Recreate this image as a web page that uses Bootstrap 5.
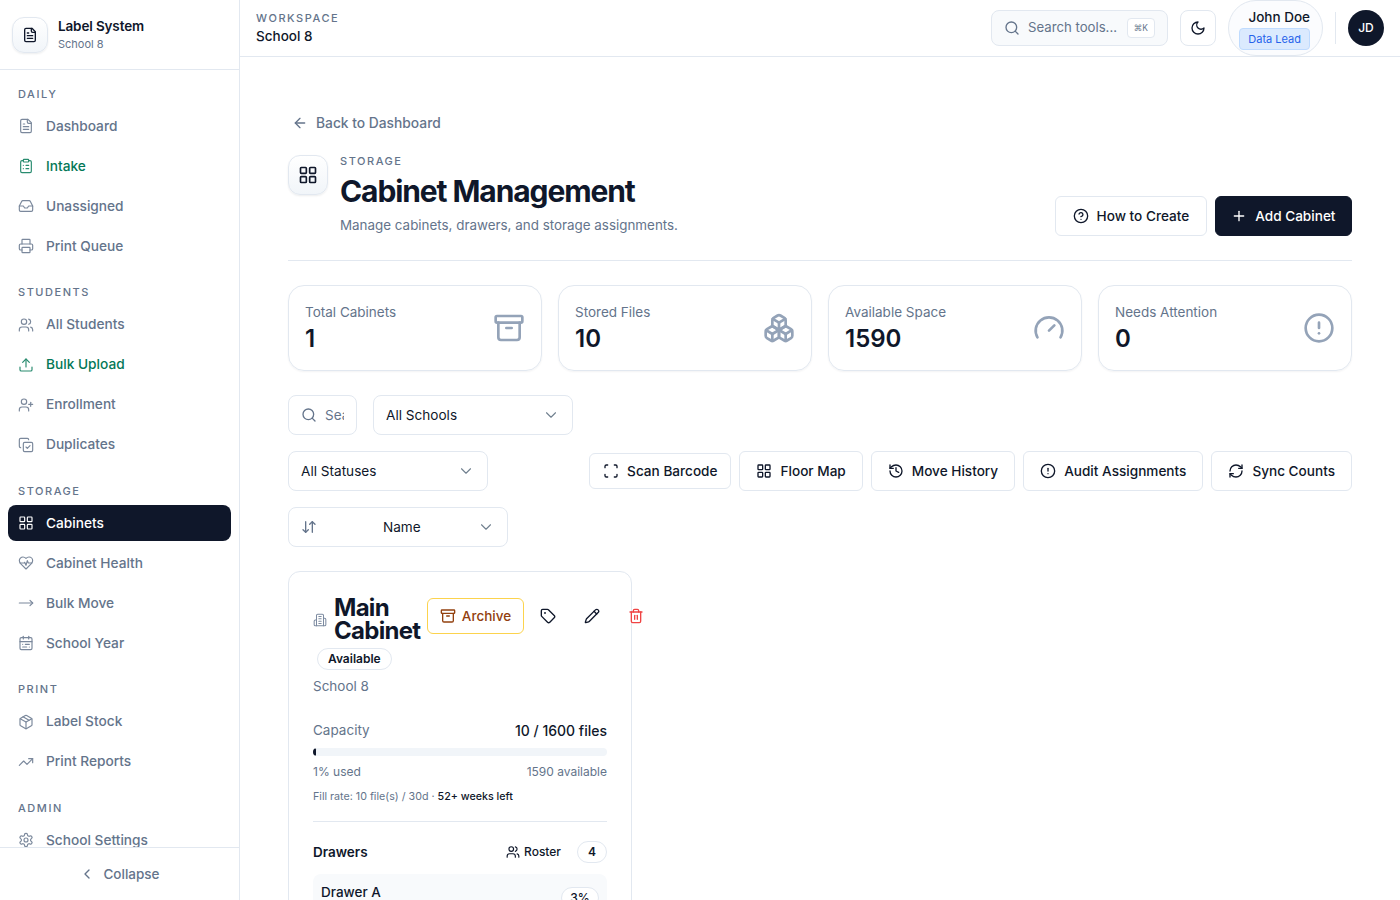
<!DOCTYPE html>
<html lang="en">
<head>
    <meta charset="UTF-8">
    <meta name="viewport" content="width=device-width, initial-scale=1.0">
    <title>Cabinet Management</title>
    <link rel="stylesheet" href="https://cdn.jsdelivr.net/npm/bootstrap@5.3.0/dist/css/bootstrap.min.css">
    <style>
        html, body { height: 100%; }
        body { font-family: Inter, "Liberation Sans", sans-serif; font-size: 13.5px; color: #0f172a; overflow: hidden; background: #fff; }
        .ico { width: 16px; height: 16px; fill: none; stroke: currentColor; stroke-width: 2; stroke-linecap: round; stroke-linejoin: round; flex-shrink: 0; }
        .app { height: 900px; }

        .sidebar { width: 240px; border-right: 1px solid #e2e8f0; flex-shrink: 0; }
        .brand { height: 70px; padding: 0 12px; gap: 10px; border-bottom: 1px solid #e2e8f0; }
        .brand-icon { width: 36px; height: 36px; }
        .brand-text { margin-bottom: 2px; }
        .logo-box { border: 1px solid #e2e8f0; border-radius: 12px; background: linear-gradient(#fff, #f1f5f9); box-shadow: 0 1px 2px rgba(15, 23, 42, .08); }
        .brand-title { font-weight: 600; line-height: 20px; letter-spacing: -.01em; }
        .brand-sub { font-size: 11px; line-height: 16px; color: #64748b; }
        .side-nav { padding: 15.75px 8px 0; overflow: hidden; }
        .side-label { font-size: 11px; font-weight: 500; line-height: 16.5px; letter-spacing: .14em; color: #64748b; padding-left: 10px; margin-bottom: 6px; }
        .side-group { display: flex; flex-direction: column; gap: 4px; margin-bottom: 20px; }
        .side-link { height: 36px; padding: 0 10px; gap: 12px; border-radius: 8px; color: #64748b; font-size: 13.7px; text-decoration: none; font-weight: 500; }
        .side-link .ico { stroke-width: 1.75; opacity: .85; }
        .side-link.green { color: #047857; }
        .side-link.active { background: #0f172a; color: #fff; }
        .side-link.active .ico { opacity: 1; }
        .collapse-row { height: 53px; border-top: 1px solid #e2e8f0; color: #64748b; font-weight: 500; gap: 8px; background: #fff; flex-shrink: 0; }

        .topbar { height: 57px; border-bottom: 1px solid #e2e8f0; padding: 0 16px; flex-shrink: 0; gap: 12px; }
        .eyebrow { font-size: 11px; font-weight: 500; line-height: 16px; letter-spacing: .14em; color: #64748b; }
        .ws-name { font-weight: 500; line-height: 20px; }
        .top-search { width: 177px; height: 36px; padding: 0 12px; gap: 8px; background: #f8fafc; border: 1px solid #e2e8f0; border-radius: 8px; color: #64748b; font-size: 13.2px; white-space: nowrap; }
        .top-kbd { font-size: 8.5px; line-height: 18px; padding: 0 6px; background: #fff; border: 1px solid #e2e8f0; border-radius: 4px; color: #64748b; margin-left: auto; }
        .btn-square { width: 36px; height: 36px; padding: 0; border: 1px solid #e2e8f0; border-radius: 8px; background: #fff; color: #0f172a; display: flex; align-items: center; justify-content: center; }
        .user-pill { width: 95px; height: 56px; padding-right: 12px; border: 1px solid #e2e8f0; border-radius: 28px; background: #fbfcfe; }
        .user-name { font-weight: 500; line-height: 20px; }
        .user-role { font-size: 11px; line-height: 20px; padding: 0 8px; margin-top: 1px; color: #2563eb; background: #dbeafe; border: 1px solid #bfdbfe; border-radius: 4px; }
        .top-div { width: 1px; height: 32px; background: #e2e8f0; }
        .avatar { width: 36px; height: 36px; background: #0f172a; color: #fff; font-size: 12px; font-weight: 500; }

        .page { padding: 56px 48px 0; overflow: hidden; }
        .back-link { color: #64748b; gap: 8px; padding-left: 4px; font-size: 13.8px; line-height: 20px; font-weight: 500; text-decoration: none; margin-bottom: 22px; }
        .page-icon { width: 40px; height: 40px; margin-right: 12px; }
        .page-title { font-size: 30px; font-weight: 700; line-height: 36px; letter-spacing: -1.1px; margin: 4px 0 6px; }
        .page-desc { color: #64748b; font-size: 13.4px; line-height: 20px; margin-bottom: 1px; }
        .page-head { padding-bottom: 24px; border-bottom: 1px solid #e2e8f0; margin-bottom: 24px; }
        .head-btn { height: 40px; padding: 0 16.5px; gap: 8px; border-radius: 6px; font-size: 13.6px; font-weight: 500; }
        .head-btn.btn-dark-navy { padding: 0 15.5px; }
        .btn-outline { background: #fff; border: 1px solid #e2e8f0; color: #0f172a; }
        .btn-dark-navy { background: #0f172a; border: 1px solid #0f172a; color: #fff; }

        .stat-card { flex: 1 1 0; height: 86px; padding: 16px; border: 1px solid #e2e8f0; border-radius: 16px; box-shadow: 0 1px 2px rgba(15, 23, 42, .05); }
        .stat-label { color: #64748b; line-height: 20px; }
        .stat-value { font-size: 24px; font-weight: 600; line-height: 32px; margin-top: 1px; }
        .stat-icon { width: 32px; height: 32px; color: #94a3b8; margin-top: 10px; }

        .filter-box { height: 40px; border: 1px solid #e2e8f0; border-radius: 8px; font-size: 13.6px; color: #0f172a; box-shadow: none; background-color: #fff; }
        .filter-search { width: 69px; padding: 0 12px; gap: 8px; color: #64748b; }
        .filter-search input { border: 0; outline: 0; min-width: 0; width: 100%; padding: 0; font-size: 13.5px; background: transparent; }
        .filter-search input::placeholder { color: #64748b; }
        .w-200 { width: 200px; }
        .form-select.filter-box { padding: 0 36px 0 12px; background-image: url("data:image/svg+xml,%3csvg xmlns='http://www.w3.org/2000/svg' viewBox='0 0 16 16'%3e%3cpath fill='none' stroke='%2371808f' stroke-linecap='round' stroke-linejoin='round' stroke-width='1.5' d='m2 5 6 6 6-6'/%3e%3c/svg%3e"); background-size: 12px; background-position: right 15px center; }
        .sort-wrap { width: 220px; }
        .sort-icon { position: absolute; left: 13px; top: 12px; color: #64748b; }
        .form-select.sort-select { padding-left: 94px; }
        .tool-btn { height: 40px; padding: 0 16px; gap: 8px; border-radius: 6px; font-weight: 500; font-size: 13.6px; }
        .tool-btn.small { height: 36px; padding: 0 13px; gap: 8.5px; }

        .cab-card { width: 344px; padding: 24px; border: 1px solid #e2e8f0; border-radius: 12px; }
        .cab-left { width: 107px; flex-shrink: 0; }
        .cab-title { font-size: 24px; font-weight: 700; line-height: 23px; letter-spacing: -.03em; margin: 0; }
        .cab-bldg { width: 14px; height: 14px; color: #7c8aa0; margin-top: 17px; margin-right: 7px; stroke-width: 1.75; }
        .status-pill { font-size: 12px; font-weight: 600; line-height: 20px; padding: 0 10px; border: 1px solid #e2e8f0; border-radius: 999px; margin: 6px 0 0 4px; }
        .cab-actions { gap: 8px; flex-shrink: 0; margin-left: 7px; margin-top: 2px; }
        .archive-btn { height: 36px; width: 97px; padding: 0; gap: 6px; border: 1px solid #fcd34d; border-radius: 6px; color: #92400e; background: #fff; font-size: 13.5px; font-weight: 500; margin-right: -2px; }
        .icon-btn { width: 36px; height: 36px; padding: 0; border: 0; background: transparent; color: #0f172a; display: flex; align-items: center; justify-content: center; }
        .icon-btn.danger { color: #ef4444; }
        .muted { color: #64748b; }
        .school-line { line-height: 21px; margin-top: 6px; }
        .cap-row { line-height: 21px; margin-top: 23px; }
        .cap-value { font-size: 14px; font-weight: 500; }
        .cap-bar { height: 8px; margin-top: 7px; background: #f1f5f9; border-radius: 999px; }
        .cap-bar .progress-bar { background: #0f172a; border-radius: 999px; }
        .cap-foot { font-size: 12px; line-height: 18px; margin-top: 7px; color: #64748b; }
        .fill-rate { font-size: 10.7px; line-height: 16px; margin-top: 8px; color: #64748b; }
        .fill-rate b { font-weight: 500; color: #0f172a; }
        .cab-hr { height: 1px; background: #e2e8f0; margin: 16px 0 19px; }
        .drawers-title { font-weight: 600; }
        .roster { font-size: 12px; font-weight: 500; gap: 4px; margin-right: 16px; }
        .count-pill { width: 30px; height: 22px; font-size: 12px; font-weight: 600; border: 1px solid #e2e8f0; border-radius: 999px; }
        .drawer-row { margin-top: 11px; padding: 8px; background: #f8fafc; border-radius: 8px; height: 90px; }
        .drawer-name { font-weight: 500; line-height: 21px; }
        .drawer-pct { width: 38px; height: 22px; font-size: 12px; font-weight: 500; border: 1px solid #e2e8f0; border-radius: 999px; margin-top: 5px; background: #fff; }
    </style>
</head>
<body>
    <svg width="0" height="0" class="position-absolute">
        <symbol id="i-file" viewBox="0 0 24 24"><path d="M15 2H6a2 2 0 0 0-2 2v16a2 2 0 0 0 2 2h12a2 2 0 0 0 2-2V7Z"/><path d="M14 2v4a2 2 0 0 0 2 2h4"/><path d="M10 9H8"/><path d="M16 13H8"/><path d="M16 17H8"/></symbol>
        <symbol id="i-clipboard" viewBox="0 0 24 24"><rect x="8" y="2" width="8" height="4" rx="1"/><path d="M16 4h2a2 2 0 0 1 2 2v14a2 2 0 0 1-2 2H6a2 2 0 0 1-2-2V6a2 2 0 0 1 2-2h2"/><path d="M12 11h4"/><path d="M12 16h4"/><path d="M8 11h.01"/><path d="M8 16h.01"/></symbol>
        <symbol id="i-inbox" viewBox="0 0 24 24"><polyline points="22 12 16 12 14 15 10 15 8 12 2 12"/><path d="M5.45 5.11 2 12v6a2 2 0 0 0 2 2h16a2 2 0 0 0 2-2v-6l-3.45-6.89A2 2 0 0 0 16.76 4H7.24a2 2 0 0 0-1.79 1.11z"/></symbol>
        <symbol id="i-printer" viewBox="0 0 24 24"><path d="M6 18H4a2 2 0 0 1-2-2v-5a2 2 0 0 1 2-2h16a2 2 0 0 1 2 2v5a2 2 0 0 1-2 2h-2"/><path d="M6 9V3a1 1 0 0 1 1-1h10a1 1 0 0 1 1 1v6"/><rect x="6" y="14" width="12" height="8" rx="1"/></symbol>
        <symbol id="i-users" viewBox="0 0 24 24"><path d="M16 21v-2a4 4 0 0 0-4-4H6a4 4 0 0 0-4 4v2"/><path d="M16 3.128a4 4 0 0 1 0 7.744"/><path d="M22 21v-2a4 4 0 0 0-3-3.87"/><circle cx="9" cy="7" r="4"/></symbol>
        <symbol id="i-upload" viewBox="0 0 24 24"><path d="M12 3v12"/><path d="m17 8-5-5-5 5"/><path d="M21 15v4a2 2 0 0 1-2 2H5a2 2 0 0 1-2-2v-4"/></symbol>
        <symbol id="i-user-plus" viewBox="0 0 24 24"><path d="M16 21v-2a4 4 0 0 0-4-4H6a4 4 0 0 0-4 4v2"/><circle cx="9" cy="7" r="4"/><line x1="19" y1="8" x2="19" y2="14"/><line x1="22" y1="11" x2="16" y2="11"/></symbol>
        <symbol id="i-copy-check" viewBox="0 0 24 24"><path d="m12 15 2 2 4-4"/><rect x="8" y="8" width="14" height="14" rx="2"/><path d="M4 16c-1.1 0-2-.9-2-2V4c0-1.1.9-2 2-2h10c1.1 0 2 .9 2 2"/></symbol>
        <symbol id="i-grid" viewBox="0 0 24 24"><rect x="3" y="3" width="7" height="7" rx="1"/><rect x="14" y="3" width="7" height="7" rx="1"/><rect x="14" y="14" width="7" height="7" rx="1"/><rect x="3" y="14" width="7" height="7" rx="1"/></symbol>
        <symbol id="i-heart" viewBox="0 0 24 24"><path d="M19 14c1.49-1.46 3-3.21 3-5.5A5.5 5.5 0 0 0 16.5 3c-1.76 0-3 .5-4.5 2-1.5-1.5-2.74-2-4.5-2A5.5 5.5 0 0 0 2 8.5c0 2.3 1.5 4.05 3 5.5l7 7Z"/><path d="M3.22 12H9.5l.5-1 2 4.5 2-7 1.5 3.5h5.27"/></symbol>
        <symbol id="i-move" viewBox="0 0 24 24"><path d="M18 8 22 12 18 16"/><path d="M2 12H22"/></symbol>
        <symbol id="i-calendar" viewBox="0 0 24 24"><rect x="3" y="4" width="18" height="18" rx="2"/><path d="M16 2v4"/><path d="M3 10h18"/><path d="M8 2v4"/><path d="M17 14h-6"/><path d="M13 18H7"/><path d="M7 14h.01"/><path d="M17 18h.01"/></symbol>
        <symbol id="i-package" viewBox="0 0 24 24"><path d="M11 21.73a2 2 0 0 0 2 0l7-4A2 2 0 0 0 21 16V8a2 2 0 0 0-1-1.73l-7-4a2 2 0 0 0-2 0l-7 4A2 2 0 0 0 3 8v8a2 2 0 0 0 1 1.73z"/><path d="M12 22V12"/><polyline points="3.29 7 12 12 20.71 7"/><path d="m7.5 4.27 9 5.15"/></symbol>
        <symbol id="i-trend" viewBox="0 0 24 24"><polyline points="22 7 13.5 15.5 8.5 10.5 2 17"/><polyline points="16 7 22 7 22 13"/></symbol>
        <symbol id="i-gear" viewBox="0 0 24 24"><path d="M12.22 2h-.44a2 2 0 0 0-2 2v.18a2 2 0 0 1-1 1.73l-.43.25a2 2 0 0 1-2 0l-.15-.08a2 2 0 0 0-2.73.73l-.22.38a2 2 0 0 0 .73 2.73l.15.1a2 2 0 0 1 1 1.72v.51a2 2 0 0 1-1 1.74l-.15.09a2 2 0 0 0-.73 2.73l.22.38a2 2 0 0 0 2.73.73l.15-.08a2 2 0 0 1 2 0l.43.25a2 2 0 0 1 1 1.73V20a2 2 0 0 0 2 2h.44a2 2 0 0 0 2-2v-.18a2 2 0 0 1 1-1.73l.43-.25a2 2 0 0 1 2 0l.15.08a2 2 0 0 0 2.73-.73l.22-.39a2 2 0 0 0-.73-2.73l-.15-.08a2 2 0 0 1-1-1.74v-.5a2 2 0 0 1 1-1.74l.15-.09a2 2 0 0 0 .73-2.73l-.22-.38a2 2 0 0 0-2.73-.73l-.15.08a2 2 0 0 1-2 0l-.43-.25a2 2 0 0 1-1-1.73V4a2 2 0 0 0-2-2z"/><circle cx="12" cy="12" r="3"/></symbol>
        <symbol id="i-chev-left" viewBox="0 0 24 24"><path d="m15 18-6-6 6-6"/></symbol>
        <symbol id="i-search" viewBox="0 0 24 24"><path d="m21 21-4.3-4.3"/><circle cx="11" cy="11" r="8"/></symbol>
        <symbol id="i-moon" viewBox="0 0 24 24"><path d="M12 3a6 6 0 0 0 9 9 9 9 0 1 1-9-9Z"/></symbol>
        <symbol id="i-arrow-left" viewBox="0 0 24 24"><path d="m12 19-7-7 7-7"/><path d="M19 12H5"/></symbol>
        <symbol id="i-help" viewBox="0 0 24 24"><circle cx="12" cy="12" r="10"/><path d="M9.09 9a3 3 0 0 1 5.83 1c0 2-3 3-3 3"/><path d="M12 17h.01"/></symbol>
        <symbol id="i-plus" viewBox="0 0 24 24"><path d="M5 12h14"/><path d="M12 5v14"/></symbol>
        <symbol id="i-archive" viewBox="0 0 24 24"><rect x="2" y="3" width="20" height="5" rx="1"/><path d="M4 8v11a2 2 0 0 0 2 2h12a2 2 0 0 0 2-2V8"/><path d="M10 12h4"/></symbol>
        <symbol id="i-boxes" viewBox="0 0 24 24"><path d="M2.97 12.92A2 2 0 0 0 2 14.63v3.24a2 2 0 0 0 .97 1.71l3 1.8a2 2 0 0 0 2.06 0L12 19v-5.5l-5-3-4.03 2.42Z"/><path d="m7 16.5-4.74-2.85"/><path d="m7 16.5 5-3"/><path d="M7 16.5v5.17"/><path d="M12 13.5V19l3.97 2.38a2 2 0 0 0 2.06 0l3-1.8a2 2 0 0 0 .97-1.71v-3.24a2 2 0 0 0-.97-1.71L17 10.5l-5 3Z"/><path d="m17 16.5-5-3"/><path d="m17 16.5 4.74-2.85"/><path d="M17 16.5v5.17"/><path d="M7.97 4.42A2 2 0 0 0 7 6.13v4.37l5 3 5-3V6.13a2 2 0 0 0-.97-1.71l-3-1.8a2 2 0 0 0-2.06 0l-3 1.8Z"/><path d="M12 8 7.26 5.15"/><path d="m12 8 4.74-2.85"/><path d="M12 13.5V8"/></symbol>
        <symbol id="i-gauge" viewBox="0 0 24 24"><path d="m12 14 4-4"/><path d="M3.34 19a10 10 0 1 1 17.32 0"/></symbol>
        <symbol id="i-alert" viewBox="0 0 24 24"><circle cx="12" cy="12" r="10"/><line x1="12" y1="8" x2="12" y2="12"/><line x1="12" y1="16" x2="12.01" y2="16"/></symbol>
        <symbol id="i-sort" viewBox="0 0 24 24"><path d="m3 16 4 4 4-4"/><path d="M7 20V4"/><path d="m21 8-4-4-4 4"/><path d="M17 4v16"/></symbol>
        <symbol id="i-scan" viewBox="0 0 24 24"><path d="M3 7V5a2 2 0 0 1 2-2h2"/><path d="M17 3h2a2 2 0 0 1 2 2v2"/><path d="M21 17v2a2 2 0 0 1-2 2h-2"/><path d="M7 21H5a2 2 0 0 1-2-2v-2"/></symbol>
        <symbol id="i-history" viewBox="0 0 24 24"><path d="M3 12a9 9 0 1 0 9-9 9.75 9.75 0 0 0-6.74 2.74L3 8"/><path d="M3 3v5h5"/><path d="M12 7v5l4 2"/></symbol>
        <symbol id="i-refresh" viewBox="0 0 24 24"><path d="M3 12a9 9 0 0 1 9-9 9.75 9.75 0 0 1 6.74 2.74L21 8"/><path d="M21 3v5h-5"/><path d="M21 12a9 9 0 0 1-9 9 9.75 9.75 0 0 1-6.74-2.74L3 16"/><path d="M8 16H3v5"/></symbol>
        <symbol id="i-building" viewBox="0 0 24 24"><path d="M6 22V4a2 2 0 0 1 2-2h8a2 2 0 0 1 2 2v18Z"/><path d="M6 12H4a2 2 0 0 0-2 2v6a2 2 0 0 0 2 2h2"/><path d="M18 9h2a2 2 0 0 1 2 2v9a2 2 0 0 1-2 2h-2"/><path d="M10 6h4"/><path d="M10 10h4"/><path d="M10 14h4"/><path d="M10 18h4"/></symbol>
        <symbol id="i-tag" viewBox="0 0 24 24"><path d="M12.586 2.586A2 2 0 0 0 11.172 2H4a2 2 0 0 0-2 2v7.172a2 2 0 0 0 .586 1.414l8.704 8.704a2.426 2.426 0 0 0 3.42 0l6.58-6.58a2.426 2.426 0 0 0 0-3.42z"/><circle cx="7.5" cy="7.5" r=".5"/></symbol>
        <symbol id="i-pencil" viewBox="0 0 24 24"><path d="M21.174 6.812a1 1 0 0 0-3.986-3.987L3.842 16.174a2 2 0 0 0-.5.83l-1.321 4.352a.5.5 0 0 0 .623.622l4.353-1.32a2 2 0 0 0 .83-.497z"/><path d="m15 5 4 4"/></symbol>
        <symbol id="i-trash" viewBox="0 0 24 24"><path d="M3 6h18"/><path d="M19 6v14c0 1-1 2-2 2H7c-1 0-2-1-2-2V6"/><path d="M8 6V4c0-1 1-2 2-2h4c1 0 2 1 2 2v2"/><line x1="10" y1="11" x2="10" y2="17"/><line x1="14" y1="11" x2="14" y2="17"/></symbol>
    </svg>

    <div class="app d-flex">
        <aside class="sidebar d-flex flex-column">
            <div class="brand d-flex align-items-center flex-shrink-0">
                <div class="brand-icon logo-box d-flex align-items-center justify-content-center"><svg class="ico"><use href="#i-file"/></svg></div>
                <div class="brand-text">
                    <div class="brand-title">Label System</div>
                    <div class="brand-sub">School 8</div>
                </div>
            </div>
            <nav class="side-nav flex-grow-1">
                <div class="side-label">DAILY</div>
                <div class="side-group">
                    <a class="side-link d-flex align-items-center" href="#"><svg class="ico"><use href="#i-file"/></svg>Dashboard</a>
                    <a class="side-link green d-flex align-items-center" href="#"><svg class="ico"><use href="#i-clipboard"/></svg>Intake</a>
                    <a class="side-link d-flex align-items-center" href="#"><svg class="ico"><use href="#i-inbox"/></svg>Unassigned</a>
                    <a class="side-link d-flex align-items-center" href="#"><svg class="ico"><use href="#i-printer"/></svg>Print Queue</a>
                </div>
                <div class="side-label">STUDENTS</div>
                <div class="side-group">
                    <a class="side-link d-flex align-items-center" href="#"><svg class="ico"><use href="#i-users"/></svg>All Students</a>
                    <a class="side-link green d-flex align-items-center" href="#"><svg class="ico"><use href="#i-upload"/></svg>Bulk Upload</a>
                    <a class="side-link d-flex align-items-center" href="#"><svg class="ico"><use href="#i-user-plus"/></svg>Enrollment</a>
                    <a class="side-link d-flex align-items-center" href="#"><svg class="ico"><use href="#i-copy-check"/></svg>Duplicates</a>
                </div>
                <div class="side-label">STORAGE</div>
                <div class="side-group">
                    <a class="side-link active d-flex align-items-center" href="#"><svg class="ico"><use href="#i-grid"/></svg>Cabinets</a>
                    <a class="side-link d-flex align-items-center" href="#"><svg class="ico"><use href="#i-heart"/></svg>Cabinet Health</a>
                    <a class="side-link d-flex align-items-center" href="#"><svg class="ico"><use href="#i-move"/></svg>Bulk Move</a>
                    <a class="side-link d-flex align-items-center" href="#"><svg class="ico"><use href="#i-calendar"/></svg>School Year</a>
                </div>
                <div class="side-label">PRINT</div>
                <div class="side-group">
                    <a class="side-link d-flex align-items-center" href="#"><svg class="ico"><use href="#i-package"/></svg>Label Stock</a>
                    <a class="side-link d-flex align-items-center" href="#"><svg class="ico"><use href="#i-trend"/></svg>Print Reports</a>
                </div>
                <div class="side-label">ADMIN</div>
                <div class="side-group">
                    <a class="side-link d-flex align-items-center" href="#"><svg class="ico"><use href="#i-gear"/></svg>School Settings</a>
                </div>
            </nav>
            <div class="collapse-row d-flex align-items-center justify-content-center"><svg class="ico"><use href="#i-chev-left"/></svg>Collapse</div>
        </aside>

        <div class="flex-grow-1 d-flex flex-column" style="min-width:0">
            <header class="topbar d-flex align-items-center">
                <div class="me-auto">
                    <div class="eyebrow">WORKSPACE</div>
                    <div class="ws-name">School 8</div>
                </div>
                <div class="top-search d-flex align-items-center">
                    <svg class="ico"><use href="#i-search"/></svg>
                    <span>Search tools...</span>
                    <span class="top-kbd">⌘K</span>
                </div>
                <button class="btn-square" type="button" aria-label="Theme"><svg class="ico"><use href="#i-moon"/></svg></button>
                <div class="user-pill d-flex flex-column align-items-end justify-content-center">
                    <div class="user-name">John Doe</div>
                    <div class="user-role">Data Lead</div>
                </div>
                <div class="top-div"></div>
                <div class="avatar rounded-circle d-flex align-items-center justify-content-center">JD</div>
            </header>

            <main class="page flex-grow-1">
                <a class="back-link d-flex align-items-center" href="#"><svg class="ico"><use href="#i-arrow-left"/></svg>Back to Dashboard</a>

                <div class="page-head d-flex align-items-end justify-content-between">
                    <div class="d-flex align-items-start">
                        <div class="page-icon logo-box d-flex align-items-center justify-content-center"><svg class="ico" style="width:20px;height:20px"><use href="#i-grid"/></svg></div>
                        <div>
                            <div class="eyebrow" style="margin-top:-2px">STORAGE</div>
                            <h1 class="page-title">Cabinet Management</h1>
                            <div class="page-desc">Manage cabinets, drawers, and storage assignments.</div>
                        </div>
                    </div>
                    <div class="d-flex gap-2">
                        <button class="btn head-btn btn-outline d-flex align-items-center" type="button"><svg class="ico"><use href="#i-help"/></svg>How to Create</button>
                        <button class="btn head-btn btn-dark-navy d-flex align-items-center" type="button"><svg class="ico"><use href="#i-plus"/></svg>Add Cabinet</button>
                    </div>
                </div>

                <div class="d-flex gap-3 mb-4">
                    <div class="stat-card d-flex justify-content-between">
                        <div><div class="stat-label">Total Cabinets</div><div class="stat-value">1</div></div>
                        <svg class="ico stat-icon"><use href="#i-archive"/></svg>
                    </div>
                    <div class="stat-card d-flex justify-content-between">
                        <div><div class="stat-label">Stored Files</div><div class="stat-value">10</div></div>
                        <svg class="ico stat-icon"><use href="#i-boxes"/></svg>
                    </div>
                    <div class="stat-card d-flex justify-content-between">
                        <div><div class="stat-label">Available Space</div><div class="stat-value">1590</div></div>
                        <svg class="ico stat-icon"><use href="#i-gauge"/></svg>
                    </div>
                    <div class="stat-card d-flex justify-content-between">
                        <div><div class="stat-label">Needs Attention</div><div class="stat-value">0</div></div>
                        <svg class="ico stat-icon"><use href="#i-alert"/></svg>
                    </div>
                </div>

                <div class="d-flex gap-3 mb-3">
                    <div class="filter-box filter-search d-flex align-items-center">
                        <svg class="ico"><use href="#i-search"/></svg>
                        <input type="text" placeholder="Search cabinets..." aria-label="Search">
                    </div>
                    <select class="form-select filter-box w-200" aria-label="School"><option>All Schools</option></select>
                </div>
                <div class="d-flex justify-content-between align-items-center mb-3">
                    <select class="form-select filter-box w-200" aria-label="Status"><option>All Statuses</option></select>
                    <div class="d-flex gap-2 align-items-center">
                        <button class="btn tool-btn small btn-outline d-flex align-items-center" type="button"><svg class="ico"><use href="#i-scan"/></svg>Scan Barcode</button>
                        <button class="btn tool-btn btn-outline d-flex align-items-center" type="button"><svg class="ico"><use href="#i-grid"/></svg>Floor Map</button>
                        <button class="btn tool-btn btn-outline d-flex align-items-center" type="button"><svg class="ico"><use href="#i-history"/></svg>Move History</button>
                        <button class="btn tool-btn btn-outline d-flex align-items-center" type="button"><svg class="ico"><use href="#i-alert"/></svg>Audit Assignments</button>
                        <button class="btn tool-btn btn-outline d-flex align-items-center" type="button"><svg class="ico"><use href="#i-refresh"/></svg>Sync Counts</button>
                    </div>
                </div>
                <div class="sort-wrap position-relative mb-4">
                    <svg class="ico sort-icon"><use href="#i-sort"/></svg>
                    <select class="form-select filter-box sort-select" aria-label="Sort"><option>Name</option></select>
                </div>

                <div class="cab-card">
                    <div class="d-flex align-items-start">
                        <div class="cab-left">
                            <div class="d-flex align-items-start">
                                <svg class="ico cab-bldg"><use href="#i-building"/></svg>
                                <h2 class="cab-title">Main Cabinet</h2>
                            </div>
                            <span class="status-pill d-inline-block">Available</span>
                        </div>
                        <div class="cab-actions d-flex align-items-center">
                            <button class="btn archive-btn d-flex align-items-center justify-content-center" type="button"><svg class="ico"><use href="#i-archive"/></svg>Archive</button>
                            <button class="icon-btn" type="button" aria-label="Tag"><svg class="ico"><use href="#i-tag"/></svg></button>
                            <button class="icon-btn" type="button" aria-label="Edit"><svg class="ico"><use href="#i-pencil"/></svg></button>
                            <button class="icon-btn danger" type="button" aria-label="Delete"><svg class="ico"><use href="#i-trash"/></svg></button>
                        </div>
                    </div>
                    <div class="muted school-line">School 8</div>

                    <div class="cap-row d-flex justify-content-between">
                        <span class="muted">Capacity</span>
                        <span class="cap-value">10 / 1600 files</span>
                    </div>
                    <div class="progress cap-bar">
                        <div class="progress-bar" style="width:1%"></div>
                    </div>
                    <div class="cap-foot d-flex justify-content-between">
                        <span>1% used</span>
                        <span>1590 available</span>
                    </div>
                    <div class="fill-rate">Fill rate: 10 file(s) / 30d · <b>52+ weeks left</b></div>
                    <div class="cab-hr"></div>

                    <div class="d-flex align-items-center">
                        <span class="drawers-title me-auto">Drawers</span>
                        <span class="roster d-flex align-items-center"><svg class="ico" style="width:14px;height:14px"><use href="#i-users"/></svg>Roster</span>
                        <span class="count-pill d-flex align-items-center justify-content-center">4</span>
                    </div>
                    <div class="drawer-row d-flex justify-content-between align-items-start">
                        <span class="drawer-name">Drawer A</span>
                        <span class="drawer-pct d-flex align-items-center justify-content-center">3%</span>
                    </div>
                </div>
            </main>
        </div>
    </div>
</body>
</html>
